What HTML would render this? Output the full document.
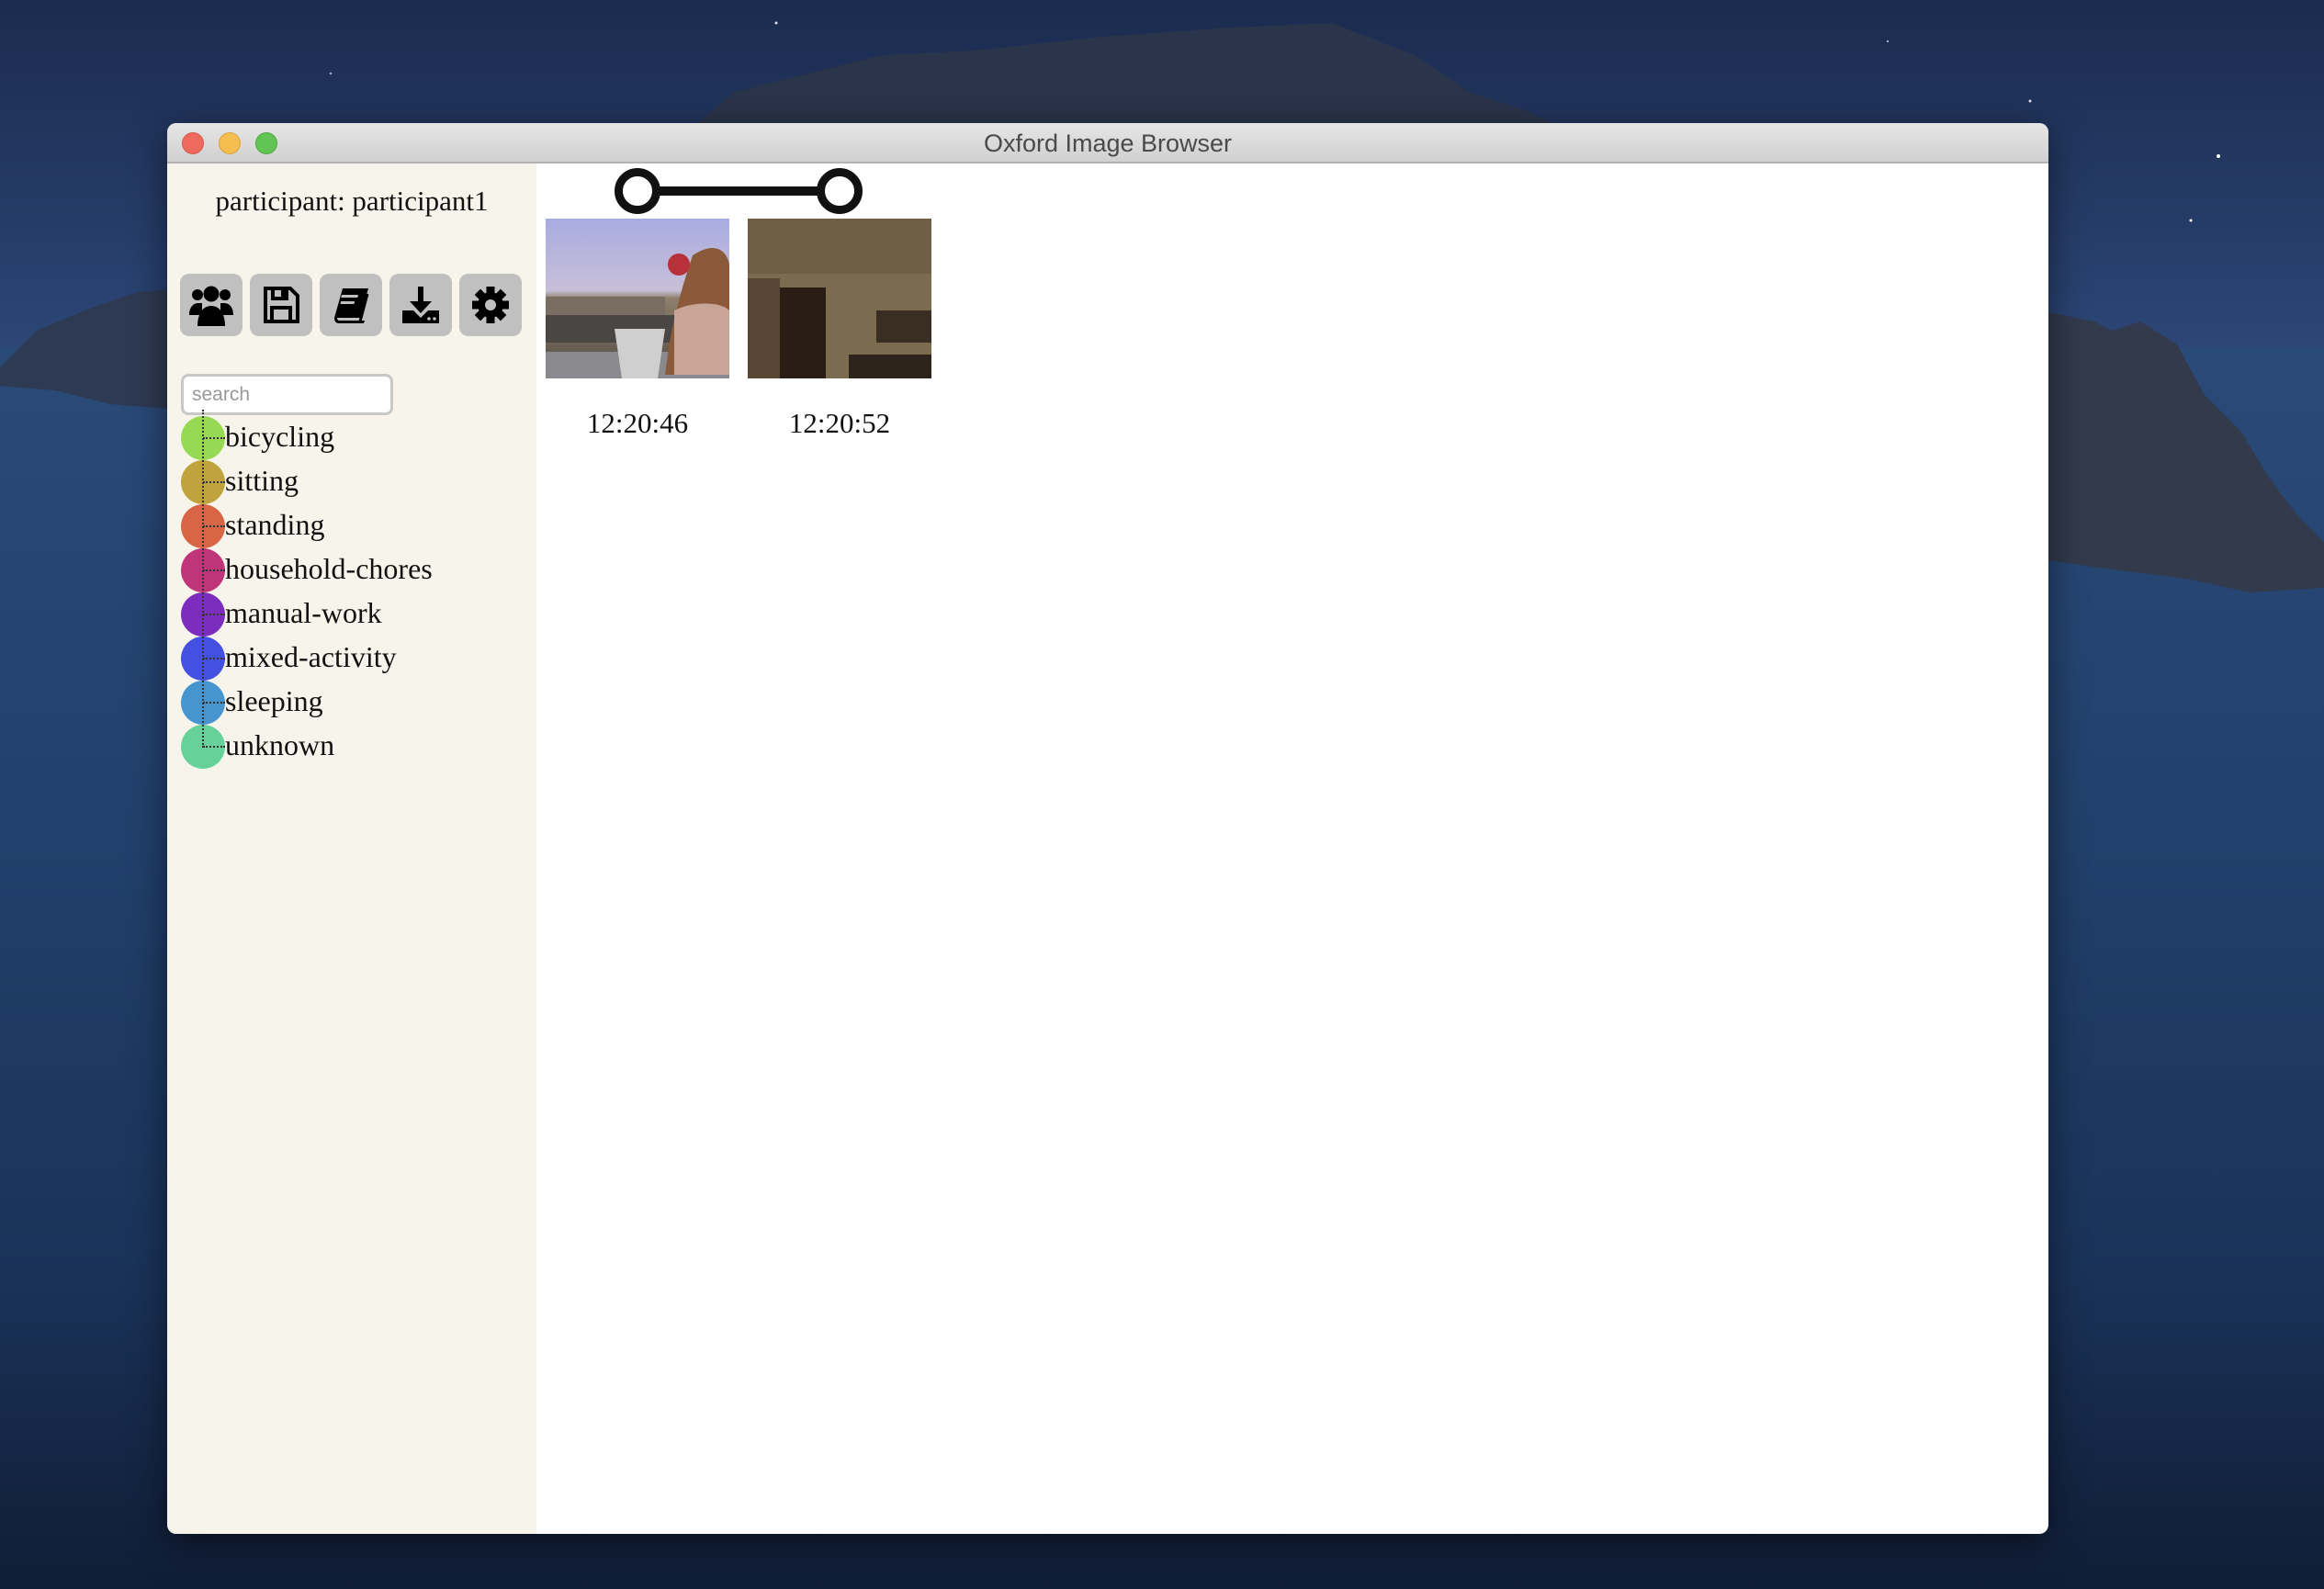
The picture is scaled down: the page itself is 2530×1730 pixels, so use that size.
<!DOCTYPE html>
<html><head><meta charset="utf-8"><style>
*{margin:0;padding:0;box-sizing:border-box}
body{width:2530px;height:1730px;overflow:hidden;position:relative;font-family:"Liberation Serif",serif;background:#1e3358}
.abs{position:absolute}
.win{left:182px;top:134px;width:2048px;height:1536px;background:#fff;border-radius:10px;overflow:hidden;box-shadow:0 10px 40px rgba(0,0,0,.5)}
.tb{left:0;top:0;width:2048px;height:44px;background:linear-gradient(#e6e6e6,#d0d0d0);border-bottom:2px solid #b3b3b3}
.tl{width:24px;height:24px;border-radius:50%;top:10px}
.title{left:0;width:2048px;top:7px;text-align:center;font-family:"Liberation Sans",sans-serif;font-size:27px;color:#4a4a4a}
.side{left:0;top:44px;width:402px;height:1492px;background:#f7f5eb}
.btn{top:120px;width:68px;height:68px;background:#c0c0c0;border-radius:10px;display:flex;align-items:center;justify-content:center}
.search{left:15px;top:229px;width:231px;height:45px;border:3px solid #c8c8c8;border-radius:8px;background:#fff;font-family:"Liberation Sans",sans-serif;font-size:21px;color:#999;padding:8px 9px}
.item{left:15px;height:48px;width:380px}
.dot{position:absolute;left:0;top:0;width:48px;height:48px;border-radius:50%}
.lab{position:absolute;left:48px;top:2px;font-size:32px;color:#111;line-height:40px}
.hl{position:absolute;left:24px;top:23px;width:24px;border-top:2px dotted #333}
.time{font-size:31px;color:#111;width:200px;text-align:center}
</style></head><body>
<svg class="abs" style="left:0;top:0" width="2530" height="1730">
<defs><linearGradient id="sky" x1="0" y1="0" x2="0" y2="1"><stop offset="0" stop-color="#1b2b4f"/><stop offset=".22" stop-color="#2c4676"/><stop offset="1" stop-color="#2c4676"/></linearGradient>
<linearGradient id="sea" x1="0" y1="0" x2="0" y2="1"><stop offset="0" stop-color="#2a4a78"/><stop offset=".4" stop-color="#21406b"/><stop offset=".75" stop-color="#1a3258"/><stop offset="1" stop-color="#101d36"/></linearGradient></defs>
<rect width="2530" height="1730" fill="url(#sky)"/>
<rect y="379" width="2530" height="1351" fill="url(#sea)"/>
<polygon points="760,134 800,100 880,80 960,60 1060,55 1200,40 1340,30 1450,25 1540,60 1600,100 1660,120 1690,134" fill="#2a344a"/>
<polygon points="0,400 40,360 100,335 150,318 182,315 182,445 120,440 60,425 0,420" fill="#2e3a52"/>
<polygon points="2230,340 2280,350 2300,360 2330,350 2370,375 2400,430 2440,470 2470,520 2500,560 2530,590 2530,640 2450,645 2380,630 2300,620 2230,610" fill="#323a4c"/>
<circle cx="2415" cy="170" r="2" fill="#fff"/><circle cx="2385" cy="240" r="1.5" fill="#fff"/><circle cx="2210" cy="110" r="1.5" fill="#dde"/><circle cx="2055" cy="45" r="1" fill="#dde"/><circle cx="845" cy="25" r="1.5" fill="#dde"/><circle cx="360" cy="80" r="1" fill="#dde"/>
</svg>
<div class="abs win">
 <div class="abs tb"></div>
 <div class="abs tl" style="left:16px;background:#ee6a5f;border:1px solid #d5594f"></div>
 <div class="abs tl" style="left:56px;background:#f5be4f;border:1px solid #dba341"></div>
 <div class="abs tl" style="left:96px;background:#61c454;border:1px solid #52a843"></div>
 <div class="abs title">Oxford Image Browser</div>
 <div class="abs side">
  <div class="abs" style="left:0;top:23px;width:402px;text-align:center;font-size:31px;color:#111">participant: participant1</div>
  <div class="abs btn" style="left:14px"><svg width="50" height="50" viewBox="0 0 50 50"><circle cx="10" cy="14" r="6"/><circle cx="40" cy="14" r="6"/><circle cx="25" cy="13" r="8.5"/><path d="M1 36c0-8 4-13 10-13h4v13zM49 36c0-8-4-13-10-13h-4v13z"/><path d="M10 48c0-12 5-22 15-22s15 10 15 22z"/></svg></div>
  <div class="abs btn" style="left:90px"><svg width="44" height="44" viewBox="0 0 44 44" fill="none" stroke="#000" stroke-width="4"><path d="M5 4h27l8 8v28H5z"/><rect x="13" y="4" width="15" height="11"/><rect x="12" y="25" width="20" height="15"/><rect x="22" y="6" width="4" height="7" fill="#000" stroke="none"/></svg></div>
  <div class="abs btn" style="left:166px"><svg width="44" height="44" viewBox="0 0 44 44"><path d="M13 4h28l-9 32H4z"/><path d="M4 36c0 4 2 6 5 6h27l1-3H10c-2 0-3-1-3-3z" /><path d="M40 10l-8 30" stroke="#000" stroke-width="3"/><rect x="15" y="11" width="18" height="3" fill="#c0c0c0" transform="skewX(-15)"/><rect x="16" y="18" width="15" height="3" fill="#c0c0c0" transform="skewX(-15)"/></svg></div>
  <div class="abs btn" style="left:242px"><svg width="44" height="44" viewBox="0 0 44 44"><rect x="19" y="2" width="6" height="18"/><path d="M10 18h24L22 31z"/><path d="M2 28h12l8 8 8-8h12v14H2z"/><circle cx="31" cy="37" r="1.8" fill="#c0c0c0"/><circle cx="37" cy="37" r="1.8" fill="#c0c0c0"/></svg></div>
  <div class="abs btn" style="left:318px"><svg width="44" height="44" viewBox="0 0 44 44"><g transform="translate(22 22)"><g id="t"><rect x="-4.5" y="-20" width="9" height="10"/></g><use href="#t" transform="rotate(45)"/><use href="#t" transform="rotate(90)"/><use href="#t" transform="rotate(135)"/><use href="#t" transform="rotate(180)"/><use href="#t" transform="rotate(225)"/><use href="#t" transform="rotate(270)"/><use href="#t" transform="rotate(315)"/><circle r="14"/><circle r="6" fill="#c0c0c0"/></g></svg></div>
  <div class="abs search">search</div>
  <div class="abs item" style="top:275px"><div class="dot" style="background:#96d952"></div><div class="hl"></div><div class="lab">bicycling</div></div>
  <div class="abs item" style="top:323px"><div class="dot" style="background:#c0a23e"></div><div class="hl"></div><div class="lab">sitting</div></div>
  <div class="abs item" style="top:371px"><div class="dot" style="background:#d86545"></div><div class="hl"></div><div class="lab">standing</div></div>
  <div class="abs item" style="top:419px"><div class="dot" style="background:#c0357a"></div><div class="hl"></div><div class="lab">household-chores</div></div>
  <div class="abs item" style="top:467px"><div class="dot" style="background:#7d2dbd"></div><div class="hl"></div><div class="lab">manual-work</div></div>
  <div class="abs item" style="top:515px"><div class="dot" style="background:#4350e0"></div><div class="hl"></div><div class="lab">mixed-activity</div></div>
  <div class="abs item" style="top:563px"><div class="dot" style="background:#4795cf"></div><div class="hl"></div><div class="lab">sleeping</div></div>
  <div class="abs item" style="top:611px"><div class="dot" style="background:#66d199"></div><div class="hl"></div><div class="lab">unknown</div></div>
  <div class="abs" style="left:38px;top:268px;height:368px;border-left:2px dotted #333"></div>
 </div>
 <svg class="abs" style="left:480px;top:44px" width="480" height="60"><line x1="32" y1="30" x2="252" y2="30" stroke="#111" stroke-width="10"/><circle cx="32" cy="30" r="20.5" fill="#fff" stroke="#111" stroke-width="9"/><circle cx="252" cy="30" r="20.5" fill="#fff" stroke="#111" stroke-width="9"/></svg>
 <svg class="abs" style="left:412px;top:104px" width="200" height="174"><defs><linearGradient id="s1" x1="0" y1="0" x2="0" y2="1"><stop offset="0" stop-color="#a9ace0"/><stop offset=".45" stop-color="#c8bfd8"/><stop offset=".5" stop-color="#8d7f6a"/><stop offset="1" stop-color="#514a44"/></linearGradient></defs><rect width="200" height="174" fill="url(#s1)"/><rect x="0" y="85" width="130" height="40" fill="#7a6e62"/><rect x="0" y="105" width="200" height="30" fill="#4a4644"/><rect x="0" y="145" width="200" height="29" fill="#8a8a8e"/><path d="M75 120h55l-8 54H83z" fill="#cfcfcf"/><path d="M160 40c30-20 45 0 40 30v100h-70c5-40 10-70 30-130z" fill="#8a5a3a"/><path d="M140 100c20-10 50-10 60 0v70h-60z" fill="#c9a597"/><circle cx="145" cy="50" r="12" fill="#b8303a"/></svg>
 <svg class="abs" style="left:632px;top:104px" width="200" height="174"><rect width="200" height="174" fill="#7c6c4f"/><rect y="0" width="200" height="60" fill="#6e5f45"/><rect x="30" y="75" width="55" height="99" fill="#2a1d14"/><rect x="0" y="65" width="35" height="109" fill="#5a4634"/><rect x="140" y="100" width="60" height="35" fill="#3a2e22"/><rect x="110" y="148" width="90" height="26" fill="#2d241c"/></svg>
 <div class="abs time" style="left:412px;top:309px">12:20:46</div>
 <div class="abs time" style="left:632px;top:309px">12:20:52</div>
</div>
</body></html>
